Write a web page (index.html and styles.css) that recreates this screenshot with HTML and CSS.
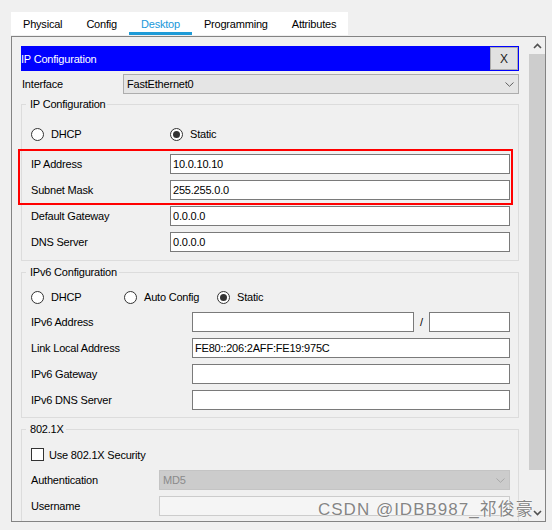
FILE: index.html
```html
<!DOCTYPE html>
<html>
<head>
<meta charset="utf-8">
<link rel="stylesheet" href="styles.css">
</head>
<body>
<div class="window">
  <div class="tabs">
    <span class="tab">Physical</span>
    <span class="tab">Config</span>
    <span class="tab active">Desktop</span>
    <span class="tab">Programming</span>
    <span class="tab">Attributes</span>
  </div>
  <div class="panel">
    <div class="content">
      <div class="titlebar">
        <span class="title">IP Configuration</span>
        <button class="close">X</button>
      </div>
      <div class="iface">
        <span class="iface-label">Interface</span>
        <div class="combo"><span>FastEthernet0</span><svg class="chev" width="9" height="5" viewBox="0 0 9 5"><polyline points="0.5,0.5 4.5,4.3 8.5,0.5" fill="none" stroke="#606060" stroke-width="1"/></svg></div>
      </div>

      <fieldset class="group g-ip">
        <legend>IP Configuration</legend>
        <div class="radios-ip">
          <label class="radio"><span class="dot"></span>DHCP</label>
          <label class="radio on"><span class="dot"></span>Static</label>
        </div>
        <div class="grid">
          <span>IP Address</span><input class="field" value="10.0.10.10">
          <span>Subnet Mask</span><input class="field" value="255.255.0.0">
          <span>Default Gateway</span><input class="field" value="0.0.0.0">
          <span>DNS Server</span><input class="field" value="0.0.0.0">
        </div>
      </fieldset>

      <fieldset class="group g-v6">
        <legend>IPv6 Configuration</legend>
        <div class="radios-v6">
          <label class="radio"><span class="dot"></span>DHCP</label>
          <label class="radio"><span class="dot"></span>Auto Config</label>
          <label class="radio on"><span class="dot"></span>Static</label>
        </div>
        <div class="grid">
          <span>IPv6 Address</span>
          <div class="addr-pair"><input class="field" value=""><span class="slash">/</span><input class="field prefix" value=""></div>
          <span>Link Local Address</span><input class="field" value="FE80::206:2AFF:FE19:975C">
          <span>IPv6 Gateway</span><input class="field" value="">
          <span>IPv6 DNS Server</span><input class="field" value="">
        </div>
      </fieldset>

      <fieldset class="group g-8021x">
        <legend>802.1X</legend>
        <label class="check"><span class="box"></span>Use 802.1X Security</label>
        <div class="grid">
          <span>Authentication</span>
          <div class="combo disabled"><span>MD5</span><svg class="chev" width="9" height="5" viewBox="0 0 9 5"><polyline points="0.5,0.5 4.5,4.3 8.5,0.5" fill="none" stroke="#a8a8a8" stroke-width="1"/></svg></div>
          <span>Username</span><input class="field disabled" value="">
        </div>
      </fieldset>
    </div>
    <div class="scrollbar">
      <div class="sb-btn"><svg width="9" height="6" viewBox="0 0 9 6"><polyline points="1,5 4.5,1.5 8,5" fill="none" stroke="#505050" stroke-width="1.6"/></svg></div>
      <div class="sb-thumb"></div>
      <div class="sb-track"></div>
      <div class="sb-btn"><svg width="9" height="6" viewBox="0 0 9 6"><polyline points="1,1 4.5,4.5 8,1" fill="none" stroke="#505050" stroke-width="1.6"/></svg></div>
    </div>
  </div>
</div>
<div class="highlight"></div>
<div class="watermark">CSDN @IDBB987_祁俊豪</div>
</body>
</html>
```

FILE: styles.css
```css
* { box-sizing: border-box; }

body {
  margin: 0;
  width: 552px;
  height: 530px;
  overflow: hidden;
  position: relative;
  background: #f0f0f0;
  font-family: "Liberation Sans", Arial, sans-serif;
  font-size: 11px;
  letter-spacing: -0.2px;
  color: #000;
}

.window {
  padding: 12px 0 0 11px;
}

.tabs {
  display: flex;
  width: fit-content;
  height: 23px;
  margin-bottom: 1px;
  background: #fff;
}

.tab {
  padding: 1px 12px 0;
  line-height: 22px;
}

.tab.active {
  color: #1a98da;
  box-shadow: inset 0 -3px 0 #1e9bd7;
}

.panel {
  display: flex;
  width: 535px;
  height: 486px;
  border: 1px solid #838383;
}

.content {
  flex: 1;
  overflow: hidden;
  padding: 9px 10px 0 9px;
}

.titlebar {
  display: flex;
  align-items: center;
  justify-content: space-between;
  height: 25px;
  background: #0000ff;
  color: #fff;
}

.close {
  width: 28px;
  height: 23px;
  margin: 0 1px 0 0;
  padding: 0;
  background: #e1e1e1;
  border: 1px solid #adadad;
  font-family: "Liberation Sans", Arial, sans-serif;
  font-size: 12px;
  color: #222;
}

.iface {
  display: flex;
  align-items: center;
  height: 20px;
  margin-top: 3px;
}

.iface-label {
  width: 102px;
  padding-left: 1px;
}

.combo {
  flex: 1;
  height: 20px;
  display: flex;
  align-items: center;
  justify-content: space-between;
  padding: 0 4px 0 3px;
  background: #e5e5e5;
  border: 1px solid #adadad;
}

.combo.disabled {
  background: #cccccc;
  border-color: #c4c4c4;
  color: #8a8a8a;
}

.group {
  margin: 3px 0 0;
  padding: 0 8px 8px 9px;
  border: 1px solid #dcdcdc;
  min-width: 0;
}

.group legend {
  padding: 0 2px 0 4px;
  margin-left: -5px;
  line-height: 14px;
}

.g-v6, .g-8021x {
  margin-top: 4px;
}

.g-v6 {
  padding-bottom: 7px;
}

.grid {
  display: grid;
  row-gap: 6px;
  align-items: center;
}

.g-ip .grid { grid-template-columns: 139px 1fr; margin-top: 12px; }
.g-v6 .grid { grid-template-columns: 161px 1fr; margin-top: 7px; }
.g-8021x .grid { grid-template-columns: 128px 1fr; margin-top: 8px; }

.field {
  display: block;
  width: 100%;
  height: 20px;
  margin: 0;
  padding: 0 2px;
  border: 1px solid #7a7a7a;
  background: #fff;
  font: inherit;
  letter-spacing: inherit;
  color: #000;
  outline: none;
}

.field.disabled {
  border-color: #cccccc;
  background: #f5f5f5;
}

.addr-pair {
  display: flex;
  align-items: center;
}

.addr-pair .field { flex: 1; width: auto; min-width: 0; }
.addr-pair .field.prefix { flex: none; width: 81px; }

.slash {
  width: 15px;
  text-align: center;
}

.radios-ip {
  display: grid;
  grid-template-columns: 139px 1fr;
  height: 16px;
  margin-top: 15px;
}

.radios-v6 {
  display: flex;
  height: 16px;
  margin-top: 10px;
}

.radios-v6 .radio { width: 93px; }

.radio {
  display: flex;
  align-items: center;
  gap: 7px;
}

.radio .dot {
  width: 13px;
  height: 13px;
  border: 1px solid #333;
  border-radius: 50%;
  background: #fff;
  display: flex;
  align-items: center;
  justify-content: center;
}

.radio.on .dot::after {
  content: "";
  width: 7px;
  height: 7px;
  border-radius: 50%;
  background: #333;
}

.check {
  display: flex;
  align-items: center;
  gap: 5px;
  height: 15px;
  margin-top: 11px;
}

.check .box {
  width: 13px;
  height: 13px;
  border: 1px solid #333;
  background: #fff;
}

.scrollbar {
  width: 16px;
  display: flex;
  flex-direction: column;
  background: #f0f0f0;
}

.sb-btn {
  height: 17px;
  display: flex;
  align-items: center;
  justify-content: center;
}

.sb-thumb {
  height: 416px;
  background: #cdcdcd;
}

.sb-track {
  flex: 1;
}

.highlight {
  position: absolute;
  left: 18px;
  top: 149px;
  width: 495px;
  height: 56px;
  border: 2px solid #ff0000;
}

.watermark {
  position: absolute;
  left: 318px;
  top: 500px;
  font-size: 17px;
  line-height: 20px;
  letter-spacing: 1px;
  color: #858585;
  font-family: "Liberation Sans", "Noto Sans CJK SC", sans-serif;
  text-shadow: 0 0 2px #fff, 0 0 1px #fff;
}
```
